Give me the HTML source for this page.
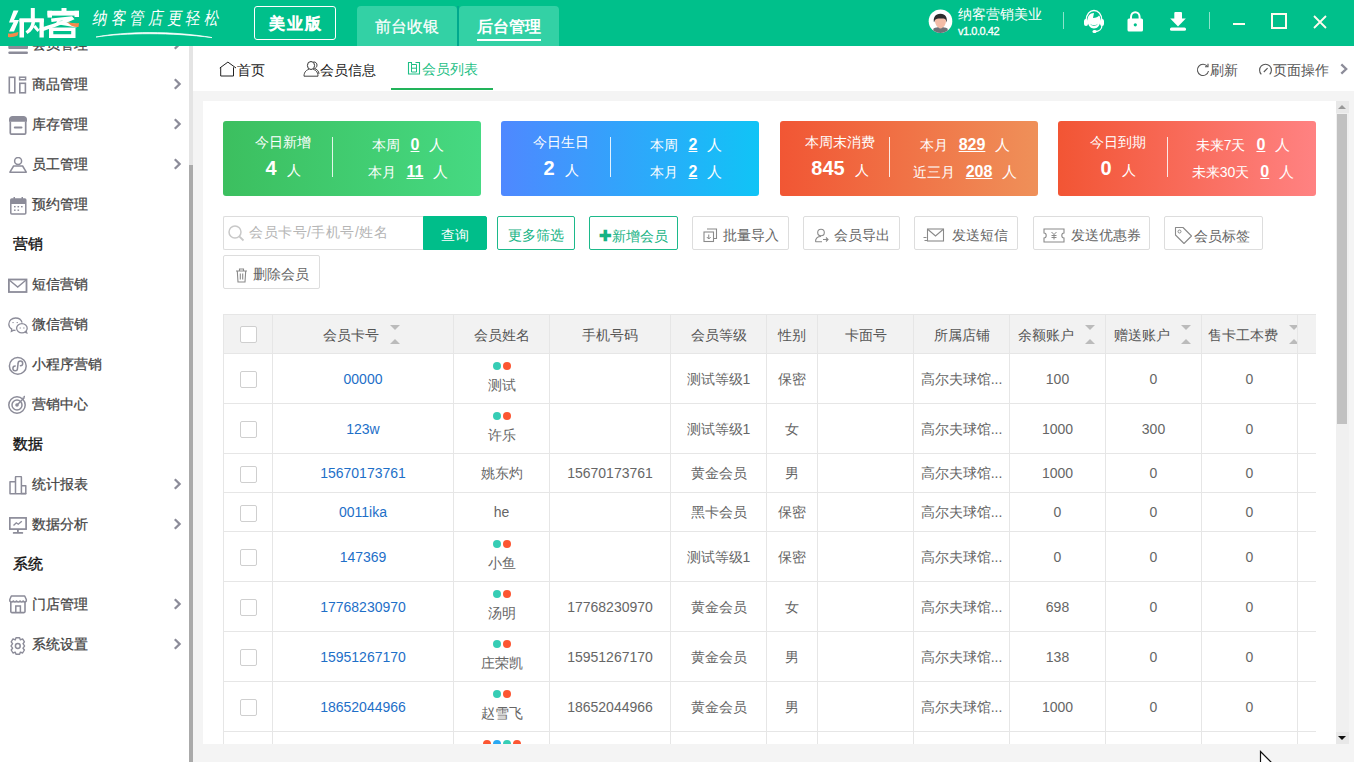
<!DOCTYPE html>
<html><head><meta charset="utf-8">
<style>
*{margin:0;padding:0;box-sizing:border-box}
html,body{width:1354px;height:762px;overflow:hidden;background:#f4f4f4;font-family:"Liberation Sans",sans-serif;font-size:14px;color:#555}
.abs{position:absolute}
#hdr{position:absolute;left:0;top:0;width:1354px;height:46px;background:#00c08b}
#side{position:absolute;left:0;top:46px;width:189px;height:716px;background:#fff;overflow:hidden}
#sscroll{position:absolute;left:189px;top:46px;width:4px;height:716px;background:#e4e4e4}
#sthumb{position:absolute;left:189px;top:165px;width:4px;height:597px;background:#aaa}
#tabs{position:absolute;left:193px;top:46px;width:1161px;height:45px;background:#fff}
#card{position:absolute;left:203px;top:101px;width:1133px;height:643px;background:#fff;overflow:hidden}
#vscroll{position:absolute;left:1336px;top:101px;width:13px;height:643px;background:#f0f0f0}
.mi{position:absolute;left:0;width:189px;height:40px;font-size:14px;color:#444}
.mi .t{position:absolute;left:32px;top:11px;line-height:18px;-webkit-text-stroke:0.25px #444}
.mi .ic{position:absolute;left:8px;top:11px;width:18px;height:18px}
.mi .ch{position:absolute;left:172px;top:14px;width:10px;height:12px}
.sec{position:absolute;left:13px;font-size:15px;color:#111;font-weight:normal;-webkit-text-stroke:0.35px #111}
.stat{position:absolute;top:20px;width:258px;height:75px;border-radius:3px;color:#fff}
.btn{position:absolute;top:115px;height:34px;padding-top:3px;border:1px solid #ddd;border-radius:2px;background:#fff;font-size:14px;color:#666;line-height:31px;white-space:nowrap}
.gbtn{border-color:#1cb98a;color:#16b384}
table{position:absolute;left:20px;top:213px;border-collapse:collapse;table-layout:fixed;font-size:14px;color:#666}
td,th{border:1px solid #e6e6e6;text-align:center;font-weight:normal;padding:0;white-space:nowrap;overflow:hidden}
td{padding-top:2px}
td.nmc2{padding-top:0;padding-bottom:2px}
.ht{position:relative;top:2px}
.n{position:relative;top:-1px}
th{background:#f2f2f2;height:39px;color:#555;padding:0 6px}
.cb{display:inline-block;width:17px;height:17px;border:1px solid #cfcfcf;border-radius:2px;background:#fff;vertical-align:middle}
.lk{color:#1e6fc8}
.dot{display:inline-block;width:8px;height:8px;border-radius:50%;margin:0 1px}
.dt{background:#36cdb5}.do{background:#fc5632}.db{background:#2aa8f2}
.sa{position:relative;display:inline-block;width:11px;height:20px;vertical-align:middle;margin-left:10px;margin-right:3px}
.sa i{position:absolute;left:1px;width:0;height:0;border-left:5px solid transparent;border-right:5px solid transparent}
.sa .ad{top:1px;border-top:5px solid #bbb}
.sa .au{top:15px;border-bottom:5px solid #bbb}
.dots{line-height:8px;height:8px;font-size:0}
.nm{line-height:18px;margin-top:6px}
</style></head><body>
<div id="hdr">
<svg class="abs" style="left:0;top:0" width="240" height="46" viewBox="0 0 240 46">
 <g fill="#fff">
  <path d="M13.5 10.5 L18.5 10.5 L14 20 L19 20 L14 31.5 L9 31.5 L13.5 22.5 L9 22.5 Z"/>
  <rect x="19.5" y="19" width="4.5" height="18.5"/>
  <rect x="39.5" y="19" width="4.3" height="18.5"/>
  <rect x="19.5" y="18.3" width="24.3" height="4"/>
  <rect x="30.8" y="8" width="4" height="13"/>
  <path d="M31.5 22 L35 22 C34.5 27.5 32 31 27.5 34 L25.5 31.5 C29 29 31 26 31.5 22 Z"/>
  <path d="M33 27 L35.5 25 L39.5 30 L37.5 32 Z"/>
  <rect x="61.5" y="8" width="5" height="4"/>
  <rect x="47.5" y="10.8" width="31.5" height="4.8"/>
  <rect x="47.5" y="10.8" width="4.5" height="6.8"/>
  <rect x="74.5" y="10.8" width="4.5" height="6.2"/>
  <path d="M51 18.5 L72 16.3 L74.5 19.3 C66 23 54 27.5 40.5 32 L39 28.5 C49 25 57 22.5 63.5 20.5 L51.5 22 Z"/>
  <path d="M57 20.8 L77 24 L76.5 27.5 L56 24 Z"/>
  <path d="M49 27.5 H75.5 V38 H49 Z M53.3 31 V34.3 H71.2 V31 Z" fill-rule="evenodd"/>
 </g>
 <path d="M8 33.5 C12 34 15 33 18.5 32 L17.5 35.5 C14 37 11 37.5 8 37 Z" fill="#f5884a"/>
 <path d="M67 22 C70 23 73.5 23.5 79 23 L78.5 27 C74 27.5 70 25.5 67 22 Z" fill="#f5884a"/>
 <path d="M96 37 C125 31.5 172 30.5 212 37.6 C172 32.3 125 32.8 96 37 Z" fill="#fff" stroke="#fff" stroke-width="0.7"/>
</svg>
<div class="abs" style="left:93px;top:6px;font-size:14.5px;letter-spacing:3.7px;color:#fff;line-height:24px;transform:skewX(-10deg) scaleY(1.2);transform-origin:0 50%;font-weight:normal;white-space:nowrap">纳客管店更轻松</div>
<div class="abs" style="left:254px;top:6px;width:82px;height:34px;border:1px solid #fff;border-radius:3px;color:#fff;font-size:15.5px;font-weight:normal;-webkit-text-stroke:1px #fff;letter-spacing:2px;text-indent:2px;text-align:center;line-height:33px">美业版</div>
<div class="abs" style="left:357px;top:6px;width:100px;height:40px;background:#33d1a5;border-radius:4px 4px 0 0;color:#fff;font-size:16px;text-align:center;line-height:42px;-webkit-text-stroke:0.2px #fff">前台收银</div>
<div class="abs" style="left:457px;top:6px;width:2px;height:40px;background:#00a98e"></div>
<div class="abs" style="left:459px;top:6px;width:100px;height:40px;background:#33d1a5;border-radius:4px 4px 0 0;color:#fff;font-size:16px;font-weight:bold;text-align:center;line-height:42px">后台管理</div>
<div class="abs" style="left:477px;top:39px;width:64px;height:2px;background:#fff"></div>
<svg class="abs" style="left:928px;top:8.5px" width="25" height="25" viewBox="0 0 25 25">
 <defs><clipPath id="avc"><circle cx="12.5" cy="12.2" r="11.8"/></clipPath></defs>
 <circle cx="12.5" cy="12.2" r="11.8" fill="#fff"/>
 <g clip-path="url(#avc)">
  <path d="M4.5 25 L5.5 19.5 C7.5 18.5 10 18 12.5 18 C15 18 17.5 18.5 19.5 19.5 L20.5 25 Z" fill="#6e7177"/>
  <path d="M7 12 C7 9 9 8 12.5 8 C16 8 18 9 18 12 C18 15.5 15.5 19 12.5 19.5 C9.5 19 7 15.5 7 12 Z" fill="#f3bca7"/>
  <path d="M6 13.5 C5 9 7 4.7 12.5 4.7 C17.5 4.7 19.5 8.5 18.7 13.5 L17.8 10.8 C17 9.5 15 9.3 12.5 9.6 C10 9.6 8 9.8 7 11 Z" fill="#2d2d2d"/>
 </g>
</svg>
<div class="abs" style="left:958px;top:5px;font-size:14px;color:#fff;line-height:18px;white-space:nowrap">纳客营销美业</div>
<div class="abs" style="left:958px;top:24px;font-size:11px;letter-spacing:-0.45px;color:#fff;line-height:14px;white-space:nowrap;-webkit-text-stroke:0.3px #fff">v1.0.0.42</div>
<div class="abs" style="left:1063px;top:12px;width:1px;height:17px;background:rgba(255,255,255,.55)"></div>
<svg class="abs" style="left:1082px;top:8px" width="24" height="26" viewBox="0 0 24 26">
 <path d="M4 13 C4 6 8 2.5 12 2.5 C16 2.5 20 6 20 13" fill="none" stroke="#fff" stroke-width="1.4"/>
 <path d="M12 5 C7.5 5 5.5 8.5 5.5 12 C5.5 17 8.5 20.5 12 20.5 C15.5 20.5 18.5 17 18.5 12 C18.5 10 18 8.5 17 7.5 C16 9 14 10 11 10 Z" fill="#fff"/>
 <path d="M8 15.5 C9 17.5 15 17.5 16 15.5 C15 18.5 9 18.5 8 15.5 Z" fill="#00c08b"/>
 <rect x="2" y="11" width="4" height="7" rx="2" fill="#fff"/>
 <rect x="18" y="11" width="4" height="7" rx="2" fill="#fff"/>
 <path d="M20 17 C20 21 17 23.5 13 23.5" fill="none" stroke="#fff" stroke-width="1.3"/>
 <rect x="10.5" y="22" width="4" height="3" rx="1.5" fill="#fff"/>
</svg>
<svg class="abs" style="left:1127px;top:11px" width="17" height="21" viewBox="0 0 17 21">
 <path d="M4 8 V6 C4 3 6 1.2 8.3 1.2 C10.6 1.2 12.6 3 12.6 6 V8" fill="none" stroke="#fff" stroke-width="2"/>
 <rect x="0.5" y="7.5" width="15.5" height="13" rx="1.5" fill="#fff"/>
 <circle cx="8.3" cy="13.8" r="1.6" fill="#00c08b"/>
</svg>
<svg class="abs" style="left:1169px;top:11px" width="18" height="21" viewBox="0 0 18 21">
 <rect x="5.3" y="1" width="7.7" height="8" rx="1" fill="#fff"/>
 <path d="M1.2 7.5 H16.8 L9 15.5 Z" fill="#fff"/>
 <rect x="1" y="16.5" width="16" height="3.2" rx="1.5" fill="#fff"/>
</svg>
<div class="abs" style="left:1209px;top:12px;width:1px;height:17px;background:rgba(255,255,255,.55)"></div>
<div class="abs" style="left:1233px;top:23px;width:12px;height:2px;background:#fffbee"></div>
<div class="abs" style="left:1271px;top:13px;width:16px;height:16px;border:2px solid #fffbee"></div>
<svg class="abs" style="left:1313px;top:15px" width="14" height="14" viewBox="0 0 14 14"><path d="M1 1 L13 13 M13 1 L1 13" stroke="#fffbee" stroke-width="1.8"/></svg>
</div>
<div id="side">
<div class="mi" style="top:-22px"><svg class="abs" style="left:8px;top:20px" width="20" height="20" viewBox="0 0 20 20"><rect x="0.3" y="0" width="19.7" height="5" rx="1" fill="#8c8c99"/><rect x="0.3" y="7.5" width="19.7" height="2.4" rx="1.2" fill="#8c8c99"/></svg><div class="t">会员管理</div><svg class="ch" width="10" height="12" viewBox="0 0 10 12"><path d="M2.8 1.3 L7.6 6 L2.8 10.7" fill="none" stroke="#8c8c99" stroke-width="2.3"/></svg></div>
<div class="mi" style="top:18px"><svg class="abs" style="left:8px;top:12px" width="20" height="20" viewBox="0 0 20 20"><rect x="1.3" y="1.3" width="5.5" height="15.5" fill="none" stroke="#8c8c99" stroke-width="1.6"/><rect x="11.6" y="1.2" width="6" height="2.6" fill="none" stroke="#8c8c99" stroke-width="1.5"/><rect x="11.8" y="7.3" width="5.6" height="9.5" fill="none" stroke="#8c8c99" stroke-width="1.6"/></svg><div class="t">商品管理</div><svg class="ch" width="10" height="12" viewBox="0 0 10 12"><path d="M2.8 1.3 L7.6 6 L2.8 10.7" fill="none" stroke="#8c8c99" stroke-width="2.3"/></svg></div>
<div class="mi" style="top:58px"><svg class="abs" style="left:9px;top:12px" width="20" height="20" viewBox="0 0 20 20"><path d="M3.5 0 H14.5 C16.5 0 18 1.5 18 3.5 V5.8 H0 V3.5 C0 1.5 1.5 0 3.5 0 Z" fill="#8c8c99"/><path d="M1.3 5.5 V17 C1.3 17.6 1.8 18.2 2.4 18.2 H15.6 C16.2 18.2 16.7 17.6 16.7 17 V5.5" fill="none" stroke="#8c8c99" stroke-width="1.7"/><rect x="4.8" y="10.5" width="8.7" height="2" rx="1" fill="#8c8c99"/></svg><div class="t">库存管理</div><svg class="ch" width="10" height="12" viewBox="0 0 10 12"><path d="M2.8 1.3 L7.6 6 L2.8 10.7" fill="none" stroke="#8c8c99" stroke-width="2.3"/></svg></div>
<div class="mi" style="top:98px"><svg class="abs" style="left:9px;top:13px" width="20" height="20" viewBox="0 0 20 20"><circle cx="9.1" cy="4" r="3.5" fill="none" stroke="#8c8c99" stroke-width="1.5"/><path d="M0.9 15.2 L4.6 9 H13.6 L17.3 15.2 Z" fill="none" stroke="#8c8c99" stroke-width="1.5" stroke-linejoin="round"/></svg><div class="t">员工管理</div><svg class="ch" width="10" height="12" viewBox="0 0 10 12"><path d="M2.8 1.3 L7.6 6 L2.8 10.7" fill="none" stroke="#8c8c99" stroke-width="2.3"/></svg></div>
<div class="mi" style="top:138px"><svg class="abs" style="left:8.8px;top:13px" width="20" height="20" viewBox="0 0 20 20"><rect x="1.8" y="2" width="15" height="15" rx="1" fill="none" stroke="#8c8c99" stroke-width="1.5"/><rect x="1.8" y="2" width="15" height="5" fill="#8c8c99"/><rect x="4.5" y="0" width="1.5" height="3" fill="#8c8c99"/><rect x="12.5" y="0" width="1.5" height="3" fill="#8c8c99"/><g fill="#8c8c99"><rect x="5" y="9" width="1.6" height="1.4"/><rect x="8.5" y="9" width="1.6" height="1.4"/><rect x="12" y="9" width="1.6" height="1.4"/><rect x="5" y="12.5" width="1.6" height="1.4"/><rect x="8.5" y="12.5" width="1.6" height="1.4"/></g></svg><div class="t">预约管理</div></div>
<div class="sec" style="top:188px;line-height:20px">营销</div>
<div class="mi" style="top:218px"><svg class="abs" style="left:8px;top:14px" width="20" height="20" viewBox="0 0 20 20"><rect x="0.9" y="1.5" width="17.6" height="12.5" fill="none" stroke="#8c8c99" stroke-width="1.8"/><path d="M1.5 2.3 L9.7 9 L17.8 2.3" fill="none" stroke="#8c8c99" stroke-width="1.4"/></svg><div class="t">短信营销</div></div>
<div class="mi" style="top:258px"><svg class="abs" style="left:8px;top:12px" width="20" height="20" viewBox="0 0 20 20"><path d="M7.5 14.5 C7 14.4 6.3 14.3 5.8 14.1 L3.4 15.4 L3.8 13.1 C2 12 0.8 10.3 0.8 8.3 C0.8 4.8 3.8 2 7.5 2 C10.7 2 13.4 4 14.1 6.7" fill="none" stroke="#8c8c99" stroke-width="1.3"/><ellipse cx="13.9" cy="12.3" rx="5.3" ry="4.6" fill="none" stroke="#8c8c99" stroke-width="1.3"/><path d="M16.8 16.2 L18.9 17 L18.3 15" fill="none" stroke="#8c8c99" stroke-width="1.1"/><path d="M11.6 12 H12.9 M15.2 12 H16.5 M4.4 6.6 H5.7 M8.6 6.6 H9.9" stroke="#8c8c99" stroke-width="1"/></svg><div class="t">微信营销</div></div>
<div class="mi" style="top:298px"><svg class="abs" style="left:8px;top:11.5px" width="20" height="20" viewBox="0 0 20 20"><circle cx="9.8" cy="9.9" r="8.4" fill="none" stroke="#8c8c99" stroke-width="1.5"/><path d="M7.2 10.1 A2.3 2.3 0 1 0 9.5 12.4 L10.1 7.4 A2.3 2.3 0 1 1 12.4 9.7" fill="none" stroke="#8c8c99" stroke-width="1.5" stroke-linecap="round"/></svg><div class="t">小程序营销</div></div>
<div class="mi" style="top:338px"><svg class="abs" style="left:8px;top:11px" width="20" height="20" viewBox="0 0 20 20"><circle cx="9" cy="10" r="8.2" fill="none" stroke="#8c8c99" stroke-width="1.5"/><circle cx="9" cy="10" r="5" fill="none" stroke="#8c8c99" stroke-width="1.5"/><circle cx="9" cy="10" r="1.8" fill="#8c8c99"/><path d="M9 10 L16.5 2.5" stroke="#8c8c99" stroke-width="1.5"/><path d="M14 2.5 L17 2.5 L17 0.5 Z" fill="#8c8c99"/></svg><div class="t">营销中心</div></div>
<div class="sec" style="top:388px;line-height:20px">数据</div>
<div class="mi" style="top:418px"><svg class="abs" style="left:9px;top:12px" width="20" height="20" viewBox="0 0 20 20"><path d="M1 17.5 V5.8 H6.5 V17.5 M6.5 17.5 V1.5 C6.5 1 7 0.5 7.5 0.5 H11.4 C11.9 0.5 12.4 1 12.4 1.5 V17.5 M12.4 17.5 V9.8 H16.8 V17.5 Z" fill="none" stroke="#8c8c99" stroke-width="1.5" stroke-linejoin="round"/><rect x="0.3" y="16.9" width="17.2" height="1.5" rx="0.7" fill="#8c8c99"/></svg><div class="t">统计报表</div><svg class="ch" width="10" height="12" viewBox="0 0 10 12"><path d="M2.8 1.3 L7.6 6 L2.8 10.7" fill="none" stroke="#8c8c99" stroke-width="2.3"/></svg></div>
<div class="mi" style="top:458px"><svg class="abs" style="left:9px;top:12px" width="20" height="20" viewBox="0 0 20 20"><rect x="0.8" y="1.9" width="16.3" height="11.2" fill="none" stroke="#8c8c99" stroke-width="1.7"/><path d="M4.5 9.5 L7.3 6.8 L9.3 8.2 L12.8 5.2" fill="none" stroke="#8c8c99" stroke-width="1.4"/><rect x="8" y="13" width="1.8" height="3" fill="#8c8c99"/><rect x="3.8" y="15.9" width="10.4" height="1.9" rx="0.9" fill="#8c8c99"/></svg><div class="t">数据分析</div><svg class="ch" width="10" height="12" viewBox="0 0 10 12"><path d="M2.8 1.3 L7.6 6 L2.8 10.7" fill="none" stroke="#8c8c99" stroke-width="2.3"/></svg></div>
<div class="sec" style="top:508px;line-height:20px">系统</div>
<div class="mi" style="top:538px"><svg class="abs" style="left:9px;top:11px" width="20" height="20" viewBox="0 0 20 20"><path d="M2.3 1 H15.7 L17.3 4.5 V6 C16.5 7.3 15 7.3 14.2 6 C13.4 7.3 11.9 7.3 11.1 6 C10.3 7.3 8.3 7.3 7.5 6 C6.7 7.3 5.2 7.3 4.4 6 C3.6 7.3 1.8 7.3 0.8 6 V4.5 Z" fill="none" stroke="#8c8c99" stroke-width="1.5" stroke-linejoin="round"/><path d="M1.8 6.8 V16.6 C1.8 17.2 2.2 17.6 2.8 17.6 H15 C15.6 17.6 16 17.2 16 16.6 V6.8" fill="none" stroke="#8c8c99" stroke-width="1.6"/><path d="M6.8 17.5 V11 H11.4 V17.5" fill="none" stroke="#8c8c99" stroke-width="1.5"/></svg><div class="t">门店管理</div><svg class="ch" width="10" height="12" viewBox="0 0 10 12"><path d="M2.8 1.3 L7.6 6 L2.8 10.7" fill="none" stroke="#8c8c99" stroke-width="2.3"/></svg></div>
<div class="mi" style="top:578px"><svg class="abs" style="left:8.5px;top:12.5px" width="20" height="20" viewBox="0 0 20 20"><path d="M7 0.8 H10.6 L11.4 2.9 L13.6 1.9 L15.4 4.9 L14 6.7 L15.5 8.8 L15.5 9.2 L14 11.2 L15.4 13 L13.6 16 L11.4 15.1 L10.6 17.2 H7 L6.2 15.1 L4 16 L2.2 13 L3.6 11.2 L2.1 9.2 V8.8 L3.6 6.7 L2.2 4.9 L4 1.9 L6.2 2.9 Z" fill="none" stroke="#8c8c99" stroke-width="1.4" stroke-linejoin="round"/><circle cx="8.8" cy="9" r="2.4" fill="none" stroke="#8c8c99" stroke-width="1.5"/></svg><div class="t">系统设置</div><svg class="ch" width="10" height="12" viewBox="0 0 10 12"><path d="M2.8 1.3 L7.6 6 L2.8 10.7" fill="none" stroke="#8c8c99" stroke-width="2.3"/></svg></div>
</div>
<div id="sscroll"></div><div id="sthumb"></div>
<div id="tabs">
<svg class="abs" style="left:26px;top:15px" width="18" height="16" viewBox="0 0 18 16"><path d="M0.8 7 L8.9 1.1 L17 7 M1.7 6.3 V15 H14.5 V6.3" fill="none" stroke="#222" stroke-width="1"/></svg>
<div class="abs" style="left:44px;top:15px;line-height:18px;color:#222">首页</div>
<svg class="abs" style="left:110px;top:14px" width="17" height="17" viewBox="0 0 17 17"><ellipse cx="8" cy="5.5" rx="3.6" ry="4" fill="none" stroke="#333" stroke-width="1"/><path d="M1 16.2 C1 11.5 4 9.8 6 9.3 M10 9.3 C12 9.8 15 11.5 15 16.2 H1" fill="none" stroke="#444" stroke-width="1"/><path d="M10.5 1.8 C13 2 14 3.5 14 5 C14 6.8 13 8 11.5 8.6 C13.5 9 16 11 16 14" fill="none" stroke="#444" stroke-width="1"/></svg>
<div class="abs" style="left:127px;top:15px;line-height:18px;color:#222">会员信息</div>
<svg class="abs" style="left:214px;top:15px" width="14" height="14" viewBox="0 0 14 14"><path d="M4.5 1.5 H1.5 V13 H12.5 V1.5 H8.5" fill="none" stroke="#1ebf86" stroke-width="1.1"/><path d="M4.5 3.5 H9.5 V11 H4.5 Z M4.5 7.2 H9.5 M4.5 1 V3.5" fill="none" stroke="#1ebf86" stroke-width="1"/></svg>
<div class="abs" style="left:229px;top:14px;line-height:18px;color:#1ebf86">会员列表</div>
<div class="abs" style="left:198px;top:42px;width:102px;height:2px;background:#22b35a"></div>
<svg class="abs" style="left:1003px;top:17px" width="14" height="14" viewBox="0 0 14 14"><path d="M11.5 3.5 A5.6 5.6 0 1 0 12.5 8" fill="none" stroke="#555" stroke-width="1.1"/><path d="M9 3.7 L12 3.7 L12 0.8" fill="none" stroke="#555" stroke-width="1.1"/></svg>
<div class="abs" style="left:1017px;top:15px;line-height:18px;color:#555">刷新</div>
<svg class="abs" style="left:1065px;top:17px" width="15" height="14" viewBox="0 0 15 14"><path d="M3.3 11.3 A5.9 5.9 0 1 1 11.7 11.3" fill="none" stroke="#555" stroke-width="1.1"/><path d="M5.8 9 L9.6 5.2" stroke="#555" stroke-width="1.1"/></svg>
<div class="abs" style="left:1080px;top:15px;line-height:18px;color:#555">页面操作</div>
<svg class="abs" style="left:1146px;top:17px" width="10" height="12" viewBox="0 0 10 12"><path d="M2.3 1.3 L7.2 6 L2.3 10.7" fill="none" stroke="#8c8c99" stroke-width="2.3"/></svg>
</div>
<div id="card">
<div class="stat" style="left:20px;background:linear-gradient(90deg,#3cbf5f,#46d982)">
<div class="abs" style="left:0;top:11px;width:120px;text-align:center;line-height:20px;font-size:14px">今日新增</div>
<div class="abs" style="left:0;top:34px;width:120px;text-align:center;line-height:26px;white-space:nowrap"><b style="font-size:20px">4</b><span style="font-size:14px;margin-left:10px">人</span></div>
<div class="abs" style="left:109px;top:16px;width:1px;height:40px;background:rgba(255,255,255,.85)"></div>
<div class="abs" style="left:110px;top:14px;width:150px;text-align:center;line-height:20px;font-size:14px;white-space:nowrap">本周<b style="font-size:16px;text-decoration:underline;margin:0 10px 0 11px">0</b><span style="font-size:15px">人</span></div>
<div class="abs" style="left:110px;top:41px;width:150px;text-align:center;line-height:20px;font-size:14px;white-space:nowrap">本月<b style="font-size:16px;text-decoration:underline;margin:0 10px 0 11px">11</b><span style="font-size:15px">人</span></div>
</div>
<div class="stat" style="left:298px;background:linear-gradient(90deg,#4f88ff,#10c4f6)">
<div class="abs" style="left:0;top:11px;width:120px;text-align:center;line-height:20px;font-size:14px">今日生日</div>
<div class="abs" style="left:0;top:34px;width:120px;text-align:center;line-height:26px;white-space:nowrap"><b style="font-size:20px">2</b><span style="font-size:14px;margin-left:10px">人</span></div>
<div class="abs" style="left:109px;top:16px;width:1px;height:40px;background:rgba(255,255,255,.85)"></div>
<div class="abs" style="left:110px;top:14px;width:150px;text-align:center;line-height:20px;font-size:14px;white-space:nowrap">本周<b style="font-size:16px;text-decoration:underline;margin:0 10px 0 11px">2</b><span style="font-size:15px">人</span></div>
<div class="abs" style="left:110px;top:41px;width:150px;text-align:center;line-height:20px;font-size:14px;white-space:nowrap">本月<b style="font-size:16px;text-decoration:underline;margin:0 10px 0 11px">2</b><span style="font-size:15px">人</span></div>
</div>
<div class="stat" style="left:577px;background:linear-gradient(90deg,#f15634,#ef9059)">
<div class="abs" style="left:0;top:11px;width:120px;text-align:center;line-height:20px;font-size:14px">本周末消费</div>
<div class="abs" style="left:0;top:34px;width:120px;text-align:center;line-height:26px;white-space:nowrap"><b style="font-size:20px">845</b><span style="font-size:14px;margin-left:10px">人</span></div>
<div class="abs" style="left:109px;top:16px;width:1px;height:40px;background:rgba(255,255,255,.85)"></div>
<div class="abs" style="left:110px;top:14px;width:150px;text-align:center;line-height:20px;font-size:14px;white-space:nowrap">本月<b style="font-size:16px;text-decoration:underline;margin:0 10px 0 11px">829</b><span style="font-size:15px">人</span></div>
<div class="abs" style="left:110px;top:41px;width:150px;text-align:center;line-height:20px;font-size:14px;white-space:nowrap">近三月<b style="font-size:16px;text-decoration:underline;margin:0 10px 0 11px">208</b><span style="font-size:15px">人</span></div>
</div>
<div class="stat" style="left:855px;background:linear-gradient(90deg,#f25534,#ff8282)">
<div class="abs" style="left:0;top:11px;width:120px;text-align:center;line-height:20px;font-size:14px">今日到期</div>
<div class="abs" style="left:0;top:34px;width:120px;text-align:center;line-height:26px;white-space:nowrap"><b style="font-size:20px">0</b><span style="font-size:14px;margin-left:10px">人</span></div>
<div class="abs" style="left:109px;top:16px;width:1px;height:40px;background:rgba(255,255,255,.85)"></div>
<div class="abs" style="left:110px;top:14px;width:150px;text-align:center;line-height:20px;font-size:14px;white-space:nowrap">未来7天<b style="font-size:16px;text-decoration:underline;margin:0 10px 0 11px">0</b><span style="font-size:15px">人</span></div>
<div class="abs" style="left:110px;top:41px;width:150px;text-align:center;line-height:20px;font-size:14px;white-space:nowrap">未来30天<b style="font-size:16px;text-decoration:underline;margin:0 10px 0 11px">0</b><span style="font-size:15px">人</span></div>
</div>
<div class="btn" style="left:20px;width:201px;border-radius:2px 0 0 2px;border-right:none">
 <svg class="abs" style="left:4px;top:8px" width="17" height="17" viewBox="0 0 17 17"><circle cx="7" cy="7" r="6" fill="none" stroke="#c8c8c8" stroke-width="1.5"/><path d="M11.3 11.3 L15.5 15.5" stroke="#c8c8c8" stroke-width="1.8"/></svg>
 <span class="abs" style="left:25px;top:0px;color:#b5b5b5;font-size:14px;letter-spacing:0.5px">会员卡号/手机号/姓名</span></div>
<div class="btn" style="left:220px;width:64px;background:#00be8a;border-color:#00be8a;color:#fff;text-align:center;border-radius:0 2px 2px 0">查询</div>
<div class="btn gbtn" style="left:294px;width:78px;text-align:center">更多筛选</div>
<div class="btn gbtn" style="left:386px;width:89px;text-align:center"><b style="font-size:15px">✚</b>新增会员</div>
<div class="btn" style="left:489px;width:97px"><svg class="abs" style="left:10px;top:11px" width="15" height="15" viewBox="0 0 15 15"><path d="M4 1 H13.5 V10.5 H11" fill="none" stroke="#8a8a8a" stroke-width="1.1"/><rect x="1" y="4" width="9.5" height="9.5" fill="none" stroke="#8a8a8a" stroke-width="1.1"/><path d="M5.75 6.5 V11 M3.8 9 L5.75 11 L7.7 9" fill="none" stroke="#8a8a8a" stroke-width="1"/></svg><span class="abs" style="left:30px;top:3px">批量导入</span></div>
<div class="btn" style="left:600px;width:97px"><svg class="abs" style="left:10px;top:11px" width="15" height="15" viewBox="0 0 15 15"><circle cx="7" cy="4.5" r="3.3" fill="none" stroke="#8a8a8a" stroke-width="1.1"/><path d="M1.5 13.8 C1.5 10 4 8.5 7 8.5 M9 11.5 H14 M12 9.5 L14 11.5 L12 13.5 M1.5 13.8 H8" fill="none" stroke="#8a8a8a" stroke-width="1.1"/></svg><span class="abs" style="left:30px;top:3px">会员导出</span></div>
<div class="btn" style="left:711px;width:104px"><svg class="abs" style="left:8px;top:11px" width="22" height="15" viewBox="0 0 22 15"><rect x="4.5" y="1" width="16" height="12" fill="none" stroke="#8a8a8a" stroke-width="1.1"/><path d="M5 1.5 L12.5 8 L20 1.5" fill="none" stroke="#8a8a8a" stroke-width="1.1"/><path d="M0.5 9.5 H3.5 M1.5 12.5 H4" stroke="#8a8a8a" stroke-width="1"/></svg><span class="abs" style="left:37px;top:3px">发送短信</span></div>
<div class="btn" style="left:830px;width:117px"><svg class="abs" style="left:9px;top:11px" width="22" height="15" viewBox="0 0 22 15"><path d="M1 1 H21 V5 C19.5 5 18.8 6 18.8 7.5 C18.8 9 19.5 10 21 10 V14 H1 V10 C2.5 10 3.2 9 3.2 7.5 C3.2 6 2.5 5 1 5 Z" fill="none" stroke="#8a8a8a" stroke-width="1.1"/><path d="M8.5 4 L11 6.5 L13.5 4 M11 6.5 V11.5 M8.5 7.5 H13.5 M8.5 9.5 H13.5" fill="none" stroke="#8a8a8a" stroke-width="1"/></svg><span class="abs" style="left:37px;top:3px">发送优惠券</span></div>
<div class="btn" style="left:961px;width:99px"><svg class="abs" style="left:9px;top:9px" width="19" height="19" viewBox="0 0 19 19"><path d="M1.5 1.5 H9 L17.5 10 L10 17.5 L1.5 9 Z" fill="none" stroke="#8a8a8a" stroke-width="1.1" stroke-linejoin="round"/><circle cx="5.5" cy="5.5" r="1.5" fill="none" stroke="#8a8a8a" stroke-width="1"/></svg><span class="abs" style="left:29px;top:4px">会员标签</span></div>
<div class="btn" style="left:20px;top:154px;width:97px"><svg class="abs" style="left:11px;top:12px" width="13" height="15" viewBox="0 0 13 15"><path d="M1 3 H12 M4.5 3 V1 H8.5 V3 M2.3 3 L3 14 H10 L10.7 3 M5.3 5.5 V11.5 M7.7 5.5 V11.5" fill="none" stroke="#8a8a8a" stroke-width="1.1"/></svg><span class="abs" style="left:29px;top:3px">删除会员</span></div>

<div id="tw" style="position:absolute;left:20px;top:213px;width:1093px;height:440px;overflow:hidden"><table style="left:0;top:0;width:1266px"><colgroup><col style="width:49px"><col style="width:181px"><col style="width:96px"><col style="width:121px"><col style="width:96px"><col style="width:51px"><col style="width:96px"><col style="width:96px"><col style="width:96px"><col style="width:96px"><col style="width:96px"><col style="width:96px"><col style="width:96px"></colgroup><tr><th><span class=cb></span></th><th><span class="ht">会员卡号</span><span class="sa"><i class="ad"></i><i class="au"></i></span></th><th><span class="ht">会员姓名</span></th><th><span class="ht">手机号码</span></th><th><span class="ht">会员等级</span></th><th><span class="ht">性别</span></th><th><span class="ht">卡面号</span></th><th><span class="ht">所属店铺</span></th><th><span class="ht">余额账户</span><span class="sa"><i class="ad"></i><i class="au"></i></span></th><th><span class="ht">赠送账户</span><span class="sa"><i class="ad"></i><i class="au"></i></span></th><th><span class="ht">售卡工本费</span><span class="sa"><i class="ad"></i><i class="au"></i></span></th><th></th><th></th></tr><tr style="height:50px"><td><span class="cb"></span></td><td class="lk"><span class="n">00000</span></td><td class="nmc nmc2"><div class="dots"><i class="dot dt"></i><i class="dot do"></i></div><div class="nm">测试</div></td><td></td><td>测试等级1</td><td>保密</td><td></td><td>高尔夫球馆...</td><td><span class="n">100</span></td><td><span class="n">0</span></td><td><span class="n">0</span></td><td></td><td></td></tr><tr style="height:50px"><td><span class="cb"></span></td><td class="lk"><span class="n">123w</span></td><td class="nmc nmc2"><div class="dots"><i class="dot dt"></i><i class="dot do"></i></div><div class="nm">许乐</div></td><td></td><td>测试等级1</td><td>女</td><td></td><td>高尔夫球馆...</td><td><span class="n">1000</span></td><td><span class="n">300</span></td><td><span class="n">0</span></td><td></td><td></td></tr><tr style="height:39px"><td><span class="cb"></span></td><td class="lk"><span class="n">15670173761</span></td><td class="nmc">姚东灼</td><td><span class="n">15670173761</span></td><td>黄金会员</td><td>男</td><td></td><td>高尔夫球馆...</td><td><span class="n">1000</span></td><td><span class="n">0</span></td><td><span class="n">0</span></td><td></td><td></td></tr><tr style="height:39px"><td><span class="cb"></span></td><td class="lk"><span class="n">0011ika</span></td><td class="nmc"><span class="n">he</span></td><td></td><td>黑卡会员</td><td>保密</td><td></td><td>高尔夫球馆...</td><td><span class="n">0</span></td><td><span class="n">0</span></td><td><span class="n">0</span></td><td></td><td></td></tr><tr style="height:50px"><td><span class="cb"></span></td><td class="lk"><span class="n">147369</span></td><td class="nmc nmc2"><div class="dots"><i class="dot dt"></i><i class="dot do"></i></div><div class="nm">小鱼</div></td><td></td><td>测试等级1</td><td>保密</td><td></td><td>高尔夫球馆...</td><td><span class="n">0</span></td><td><span class="n">0</span></td><td><span class="n">0</span></td><td></td><td></td></tr><tr style="height:50px"><td><span class="cb"></span></td><td class="lk"><span class="n">17768230970</span></td><td class="nmc nmc2"><div class="dots"><i class="dot dt"></i><i class="dot do"></i></div><div class="nm">汤明</div></td><td><span class="n">17768230970</span></td><td>黄金会员</td><td>女</td><td></td><td>高尔夫球馆...</td><td><span class="n">698</span></td><td><span class="n">0</span></td><td><span class="n">0</span></td><td></td><td></td></tr><tr style="height:50px"><td><span class="cb"></span></td><td class="lk"><span class="n">15951267170</span></td><td class="nmc nmc2"><div class="dots"><i class="dot dt"></i><i class="dot do"></i></div><div class="nm">庄荣凯</div></td><td><span class="n">15951267170</span></td><td>黄金会员</td><td>男</td><td></td><td>高尔夫球馆...</td><td><span class="n">138</span></td><td><span class="n">0</span></td><td><span class="n">0</span></td><td></td><td></td></tr><tr style="height:50px"><td><span class="cb"></span></td><td class="lk"><span class="n">18652044966</span></td><td class="nmc nmc2"><div class="dots"><i class="dot dt"></i><i class="dot do"></i></div><div class="nm">赵雪飞</div></td><td><span class="n">18652044966</span></td><td>黄金会员</td><td>男</td><td></td><td>高尔夫球馆...</td><td><span class="n">1000</span></td><td><span class="n">0</span></td><td><span class="n">0</span></td><td></td><td></td></tr><tr style="height:50px"><td></td><td class="lk"></td><td class="nmc nmc2"><div class="dots"><i class="dot do"></i><i class="dot db"></i><i class="dot dt"></i><i class="dot do"></i></div><div class="nm">&nbsp;</div></td><td></td><td></td><td></td><td></td><td></td><td></td><td></td><td></td><td></td><td></td></tr></table></div>
</div>
<div id="vscroll">
<div class="abs" style="left:0;top:0;width:13px;height:12px;background:#e8e8e8"></div>
<div class="abs" style="left:2px;top:4px;width:0;height:0;border-left:4px solid transparent;border-right:4px solid transparent;border-bottom:4px solid #999"></div>
<div class="abs" style="left:1px;top:13px;width:10px;height:310px;background:#c1c1c1"></div>
<div class="abs" style="left:0;top:631px;width:13px;height:12px;background:#e8e8e8"></div>
<div class="abs" style="left:2px;top:635px;width:0;height:0;border-left:4px solid transparent;border-right:4px solid transparent;border-top:4px solid #111"></div>
</div>
<svg class="abs" style="left:1259px;top:750px" width="14" height="14" viewBox="0 0 14 14"><path d="M1.5 1.5 V14 H12 L12 12 Z" fill="#fff" stroke="#111" stroke-width="1.2"/></svg>
</body></html>
